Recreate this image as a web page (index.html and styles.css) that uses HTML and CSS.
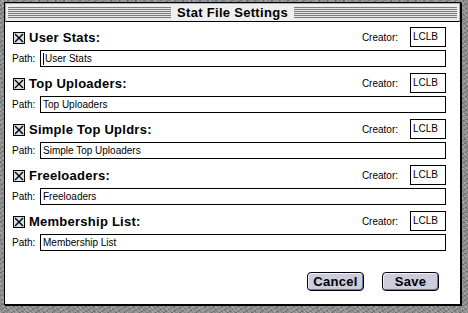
FILE: index.html
```html
<!DOCTYPE html>
<html lang="en">
<head>
  <meta charset="UTF-8" />
  <title>Stat File Settings</title>
  <link rel="stylesheet" href="styles.css">
</head>
<body>
  <div class="window">
    <div class="titlebar">
      <div class="stripes"></div>
      <div class="title">Stat File Settings</div>
      <div class="stripes"></div>
    </div>

    <div class="content">
      <div class="entry">
        <div class="head">
          <span class="check"><svg width="10" height="10" viewBox="0 0 10 10"><path d="M1 1L9 9M9 1L1 9" stroke="#000" stroke-width="1.4"/></svg></span>
          <span class="name">User Stats:</span>
          <span class="creator">Creator:</span>
          <span class="code">LCLB</span>
        </div>
        <div class="path">
          <span class="label">Path:</span>
          <span class="field"><span class="caret"></span>User Stats</span>
        </div>
      </div>

      <div class="entry">
        <div class="head">
          <span class="check"><svg width="10" height="10" viewBox="0 0 10 10"><path d="M1 1L9 9M9 1L1 9" stroke="#000" stroke-width="1.4"/></svg></span>
          <span class="name">Top Uploaders:</span>
          <span class="creator">Creator:</span>
          <span class="code">LCLB</span>
        </div>
        <div class="path">
          <span class="label">Path:</span>
          <span class="field">Top Uploaders</span>
        </div>
      </div>

      <div class="entry">
        <div class="head">
          <span class="check"><svg width="10" height="10" viewBox="0 0 10 10"><path d="M1 1L9 9M9 1L1 9" stroke="#000" stroke-width="1.4"/></svg></span>
          <span class="name">Simple Top Upldrs:</span>
          <span class="creator">Creator:</span>
          <span class="code">LCLB</span>
        </div>
        <div class="path">
          <span class="label">Path:</span>
          <span class="field">Simple Top Uploaders</span>
        </div>
      </div>

      <div class="entry">
        <div class="head">
          <span class="check"><svg width="10" height="10" viewBox="0 0 10 10"><path d="M1 1L9 9M9 1L1 9" stroke="#000" stroke-width="1.4"/></svg></span>
          <span class="name">Freeloaders:</span>
          <span class="creator">Creator:</span>
          <span class="code">LCLB</span>
        </div>
        <div class="path">
          <span class="label">Path:</span>
          <span class="field">Freeloaders</span>
        </div>
      </div>

      <div class="entry">
        <div class="head">
          <span class="check"><svg width="10" height="10" viewBox="0 0 10 10"><path d="M1 1L9 9M9 1L1 9" stroke="#000" stroke-width="1.4"/></svg></span>
          <span class="name">Membership List:</span>
          <span class="creator">Creator:</span>
          <span class="code">LCLB</span>
        </div>
        <div class="path">
          <span class="label">Path:</span>
          <span class="field">Membership List</span>
        </div>
      </div>

      <div class="buttons">
        <button>Cancel</button>
        <button>Save</button>
      </div>
    </div>
  </div>
</body>
</html>
```

FILE: styles.css
```css
body {
  margin: 0;
  width: 468px;
  height: 313px;
  overflow: hidden;
  background-color: #8a8a8a;
  background-image:
    repeating-linear-gradient(45deg, rgba(255,255,255,0.18) 0 1px, transparent 1px 3px),
    repeating-linear-gradient(-30deg, rgba(0,0,0,0.22) 0 1px, transparent 1px 4px),
    repeating-linear-gradient(80deg, rgba(255,255,255,0.12) 0 1px, transparent 1px 5px);
  font-family: "Liberation Sans", Arial, sans-serif;
  color: #000;
}
.window {
  margin: 2px 0 0 4px;
  width: 455px;
  height: 301px;
  border: 1px solid #000;
  box-shadow: 1px 1px 0 #000;
  background: #fff;
  display: flex;
  flex-direction: column;
}
.titlebar {
  height: 17px;
  background: #eeeeee;
  border: 1px solid #a8a8dc;
  border-bottom: 1px solid #000;
  display: flex;
  align-items: center;
  padding: 0 2px;
}
.stripes {
  flex: 1;
  height: 12px;
  background: repeating-linear-gradient(#7a7a7a 0 1px, #e6e6e6 1px 2px);
}
.title {
  font-weight: bold;
  font-size: 13px;
  letter-spacing: 0.3px;
  padding: 0 6px;
}
.content {
  flex: 1;
  display: flex;
  flex-direction: column;
  padding: 5px 14px 0 7px;
}
.entry {
  display: flex;
  flex-direction: column;
  gap: 3px;
  margin-bottom: 6px;
}
.head {
  display: flex;
  align-items: center;
  height: 20px;
}
.check {
  width: 10px;
  height: 10px;
  border: 1px solid #000;
  background: #dcdce8;
  display: flex;
  margin: 2px 4px 0 1px;
}
.name {
  font-weight: bold;
  font-size: 13px;
  letter-spacing: 0.25px;
  flex: 1;
}
.creator {
  font-size: 10px;
  margin-right: 12px;
}
.code {
  width: 32px;
  height: 18px;
  border: 1px solid #000;
  font-size: 10px;
  line-height: 18px;
  padding-left: 2px;
  box-sizing: content-box;
}
.path {
  display: flex;
  align-items: center;
}
.label {
  font-size: 10px;
  width: 28px;
}
.field {
  flex: 1;
  height: 15px;
  border: 1px solid #000;
  font-size: 10px;
  line-height: 15px;
  padding-left: 2px;
  display: flex;
  align-items: center;
}
.caret {
  width: 1px;
  height: 12px;
  background: #000;
  margin-right: 1px;
}
.buttons {
  display: flex;
  justify-content: flex-end;
  gap: 18px;
  margin-top: auto;
  margin-bottom: 13px;
  padding-right: 7px;
}
button {
  width: 57px;
  height: 19px;
  font-family: "Liberation Sans", Arial, sans-serif;
  font-weight: bold;
  font-size: 13px;
  letter-spacing: 0.3px;
  background: #ccccdd;
  border: 1px solid #000;
  border-radius: 4px;
  box-shadow: inset 1px 1px 0 #eeeeff, inset -1px -1px 0 #77779a;
  padding: 0;
  color: #000;
}
```
